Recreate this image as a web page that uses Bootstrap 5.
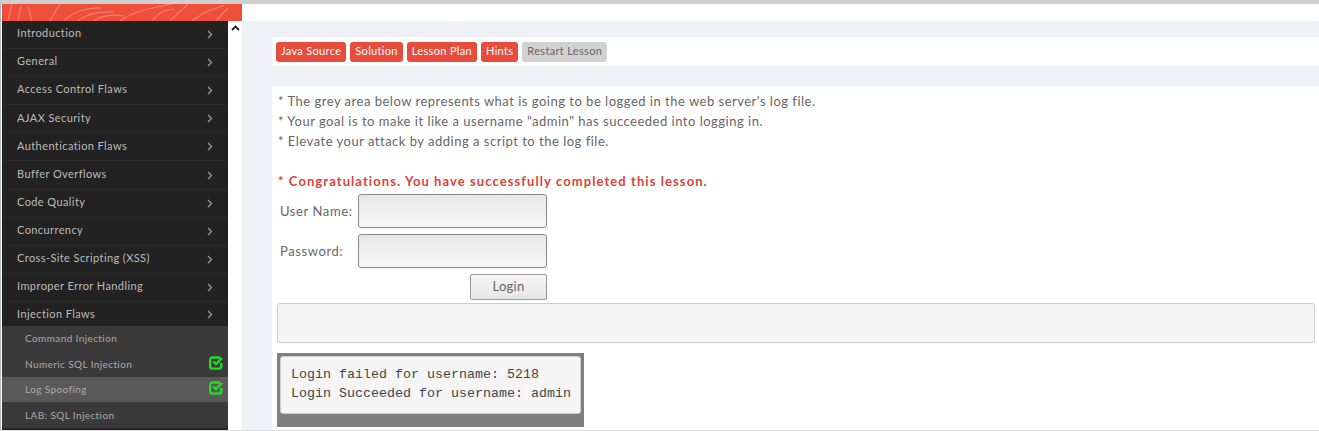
<!doctype html>
<html lang="en">
<head>
<meta charset="utf-8">
<title>WebGoat - Log Spoofing</title>
<link rel="stylesheet" href="https://cdn.jsdelivr.net/npm/bootstrap@5.3.0/dist/css/bootstrap.min.css">
<style>
html,body{height:431px;overflow:hidden;background:#fff}
body{font-family:"Lato","Open Sans",sans-serif;font-size:13px;color:#555;border-top:4px solid #cfcfcf;border-bottom:1px solid #ddd;border-left:1px solid #b5bcc0;padding-left:1px}
.brand-strip{height:17px;width:240px;background:#ee4e3a;overflow:hidden}
.brand-strip svg{display:block}
.page-body{height:409px}
.side-nav{width:226px;background:#222;border-radius:0}
.side-nav .list-group-item{background:transparent;border:0;border-bottom:1px solid #292929;border-radius:0;color:#bbb;font-size:11px;height:28.1px;padding:0 15px 2px;letter-spacing:.41px}
.side-nav .list-group-item.last-head{height:24px;padding-bottom:0;border-bottom:0}
.side-nav .list-group-item.sub-item{background:#3a3a3a;height:25.5px;border-bottom:0;padding:0 5px 0 23px;font-size:10px;letter-spacing:.4px;color:#aaa}
.side-nav .list-group-item.sub-item.current{background:#595959;color:#aaa}
.sub-check{margin-bottom:3px}
.chev{margin-top:2px}
.scroll-col{width:14px}
.main-col{background:#f0f0f7;min-width:0;padding-top:16px}
.tool-bar{background:#fff;height:29px;margin-left:30px;padding-left:4px;gap:4px}
.lesson-btn{--bs-btn-font-size:11px;--bs-btn-padding-x:5px;--bs-btn-padding-y:0;--bs-btn-border-radius:3px;--bs-btn-border-width:0;--bs-btn-line-height:18px;--bs-btn-bg:#e74c3c;--bs-btn-color:#fff;--bs-btn-hover-bg:#e74c3c;--bs-btn-hover-color:#fff;letter-spacing:.33px;padding-bottom:2px}
.lesson-btn.muted{--bs-btn-bg:#d2d2d2;--bs-btn-color:#666;--bs-btn-hover-bg:#d2d2d2;--bs-btn-hover-color:#666}
.lesson-pane{background:#fff;margin:20px 0 0 30px;height:345px;padding:5px 0 0 6px;overflow:hidden}
.lesson-copy{font-size:13px;line-height:20px;letter-spacing:.5px;color:#666}
.done-note{font-size:13px;font-weight:700;line-height:20px;letter-spacing:1.08px;color:#d9433a;margin:20px 0 0}
.login-row{height:40px;padding-left:2px}
.login-row label{width:78px;font-size:13px;letter-spacing:.6px;color:#666;padding-top:2px}
.login-field{width:189px;height:34px;border:1px solid #888;border-radius:3px;background:linear-gradient(#e8e8e8,#f6f6f6);padding:0}
.login-btn{--bs-btn-font-size:13px;--bs-btn-padding-y:0;--bs-btn-padding-x:0;--bs-btn-border-radius:2px;--bs-btn-border-color:#999;--bs-btn-color:#666;--bs-btn-bg:#f0f0f0;width:77px;height:26px;margin:3px 0 0 192px;display:block;background-image:linear-gradient(#f6f6f6,#e6e6e6);letter-spacing:.3px}
.blank-box{height:40px;margin:3px 4px 0 -1px;background:#f5f5f5;border:1px solid #ccc;border-radius:3px}
.log-frame{width:307px;height:74px;background:#7f7f7f;margin:10px 0 0 -1px;padding:3px 3px 0}
.log-text{background:#f5f5f5;border:1px solid #ccc;border-radius:3px;height:58px;margin:0;padding:8px 10px;font-family:"Liberation Mono",monospace;font-size:13.33px;line-height:19px;color:#444;overflow:hidden}
</style>
</head>
<body>
<div class="brand-strip">
<svg width="240" height="17" viewBox="0 0 240 17" fill="none" stroke="#f4826f" stroke-width="1.2"><path d="M6 17 10 0M16 17 19 2M30 17 26 3M48 17 58 0M62 17C70 8 85 3 100 4M76 17C84 10 94 7 112 8M92 17C98 12 110 10 122 12M118 17C130 8 145 5 170 0M150 17C156 10 160 6 172 5M168 17 186 0M190 17C200 10 205 6 222 2M214 17 226 4"/></svg>
</div>
<div class="d-flex page-body">
<div class="side-nav flex-shrink-0">
<div class="list-group">
<a class="list-group-item d-flex align-items-center justify-content-between">Introduction<svg class="chev" width="6" height="9" viewBox="0 0 6 9" fill="none" stroke="#999" stroke-width="1.3"><path d="M1 1l3.500 3.500L1 8"/></svg></a>
<a class="list-group-item d-flex align-items-center justify-content-between">General<svg class="chev" width="6" height="9" viewBox="0 0 6 9" fill="none" stroke="#999" stroke-width="1.3"><path d="M1 1l3.500 3.500L1 8"/></svg></a>
<a class="list-group-item d-flex align-items-center justify-content-between">Access Control Flaws<svg class="chev" width="6" height="9" viewBox="0 0 6 9" fill="none" stroke="#999" stroke-width="1.3"><path d="M1 1l3.500 3.500L1 8"/></svg></a>
<a class="list-group-item d-flex align-items-center justify-content-between">AJAX Security<svg class="chev" width="6" height="9" viewBox="0 0 6 9" fill="none" stroke="#999" stroke-width="1.3"><path d="M1 1l3.500 3.500L1 8"/></svg></a>
<a class="list-group-item d-flex align-items-center justify-content-between">Authentication Flaws<svg class="chev" width="6" height="9" viewBox="0 0 6 9" fill="none" stroke="#999" stroke-width="1.3"><path d="M1 1l3.500 3.500L1 8"/></svg></a>
<a class="list-group-item d-flex align-items-center justify-content-between">Buffer Overflows<svg class="chev" width="6" height="9" viewBox="0 0 6 9" fill="none" stroke="#999" stroke-width="1.3"><path d="M1 1l3.500 3.500L1 8"/></svg></a>
<a class="list-group-item d-flex align-items-center justify-content-between">Code Quality<svg class="chev" width="6" height="9" viewBox="0 0 6 9" fill="none" stroke="#999" stroke-width="1.3"><path d="M1 1l3.500 3.500L1 8"/></svg></a>
<a class="list-group-item d-flex align-items-center justify-content-between">Concurrency<svg class="chev" width="6" height="9" viewBox="0 0 6 9" fill="none" stroke="#999" stroke-width="1.3"><path d="M1 1l3.500 3.500L1 8"/></svg></a>
<a class="list-group-item d-flex align-items-center justify-content-between">Cross-Site Scripting (XSS)<svg class="chev" width="6" height="9" viewBox="0 0 6 9" fill="none" stroke="#999" stroke-width="1.3"><path d="M1 1l3.500 3.500L1 8"/></svg></a>
<a class="list-group-item d-flex align-items-center justify-content-between">Improper Error Handling<svg class="chev" width="6" height="9" viewBox="0 0 6 9" fill="none" stroke="#999" stroke-width="1.3"><path d="M1 1l3.500 3.500L1 8"/></svg></a>
<a class="list-group-item last-head d-flex align-items-center justify-content-between">Injection Flaws<svg class="chev" width="6" height="9" viewBox="0 0 6 9" fill="none" stroke="#999" stroke-width="1.3"><path d="M1 1l3.500 3.500L1 8"/></svg></a>
<a class="list-group-item sub-item d-flex align-items-center">Command Injection</a>
<a class="list-group-item sub-item d-flex align-items-center justify-content-between">Numeric SQL Injection<svg class="sub-check" width="14" height="14" viewBox="0 0 14 14" fill="none" stroke="#1fe01f" stroke-width="2.400"><path d="M12.300 7v3.300a2.300 2.300 0 0 1-2.300 2.300H3.500a2.300 2.300 0 0 1-2.300-2.300V3.800a2.300 2.300 0 0 1 2.300-2.300H11"/><path d="M4.500 5.500l2.500 2.500L13 2"/></svg></a>
<a class="list-group-item sub-item current d-flex align-items-center justify-content-between">Log Spoofing<svg class="sub-check" width="14" height="14" viewBox="0 0 14 14" fill="none" stroke="#1fe01f" stroke-width="2.400"><path d="M12.300 7v3.300a2.300 2.300 0 0 1-2.300 2.300H3.500a2.300 2.300 0 0 1-2.300-2.300V3.800a2.300 2.300 0 0 1 2.300-2.300H11"/><path d="M4.500 5.500l2.500 2.500L13 2"/></svg></a>
<a class="list-group-item sub-item d-flex align-items-center">LAB: SQL Injection</a>
</div>
</div>
<div class="scroll-col flex-shrink-0 d-flex justify-content-center pt-1">
<svg width="9" height="6" viewBox="0 0 9 6" fill="none" stroke="#222" stroke-width="1.800"><path d="M1 5l3.500-3.500L8 5"/></svg>
</div>
<div class="main-col flex-grow-1">
<div class="tool-bar d-flex align-items-center">
<a class="btn lesson-btn">Java Source</a>
<a class="btn lesson-btn">Solution</a>
<a class="btn lesson-btn">Lesson Plan</a>
<a class="btn lesson-btn">Hints</a>
<a class="btn lesson-btn muted">Restart Lesson</a>
</div>
<div class="lesson-pane">
<div class="lesson-copy">* The grey area below represents what is going to be logged in the web server's log file.<br>* Your goal is to make it like a username "admin" has succeeded into logging in.<br>* Elevate your attack by adding a script to the log file.</div>
<p class="done-note">* Congratulations. You have successfully completed this lesson.</p>
<div class="login-row d-flex align-items-center"><label for="user-name">User Name:</label><input id="user-name" class="login-field" type="text"></div>
<div class="login-row d-flex align-items-center"><label for="pass-word">Password:</label><input id="pass-word" class="login-field" type="password"></div>
<button type="button" class="btn login-btn">Login</button>
<div class="blank-box"></div>
<div class="log-frame"><pre class="log-text">Login failed for username: 5218
Login Succeeded for username: admin</pre></div>
</div>
</div>
</div>
<script src="https://cdn.jsdelivr.net/npm/bootstrap@5.3.0/dist/js/bootstrap.bundle.min.js"></script>
</body>
</html>
